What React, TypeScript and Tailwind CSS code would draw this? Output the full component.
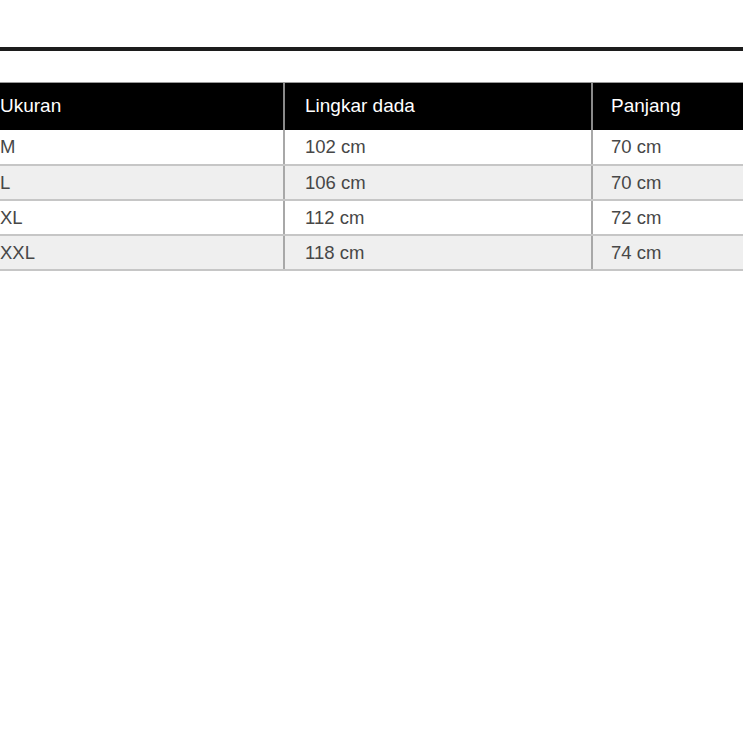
import React from "react";

const rows = [
  ["M", "102 cm", "70 cm"],
  ["L", "106 cm", "70 cm"],
  ["XL", "112 cm", "72 cm"],
  ["XXL", "118 cm", "74 cm"],
];

export default function App() {
  return (
    <div
      className="w-[743px] h-[743px] bg-white overflow-hidden pt-[47px]"
      style={{ fontFamily: '"Liberation Sans", Arial, sans-serif' }}
    >
      <div className="h-[4px] bg-[#1c1c1c]" />
      <div className="mt-[31px] border-t border-[#9a9a9a]">
        <div className="grid grid-cols-[285px_308px_1fr] h-[47px] bg-black text-white text-[19px]">
          <div className="flex items-center border-r-2 border-[#8a8a8a] pl-0">Ukuran</div>
          <div className="flex items-center border-r-2 border-[#8a8a8a] pl-[20px]">Lingkar dada</div>
          <div className="flex items-center pl-[18px]">Panjang</div>
        </div>
        {rows.map((r, i) => (
          <div
            key={r[0]}
            className={`grid grid-cols-[285px_308px_1fr] ${i === 0 ? "h-[36px]" : "h-[35px]"} border-b-2 border-[#c6c6c6] text-[18.5px] text-[#474747] ${
              i % 2 === 1 ? "bg-[#efefef]" : "bg-white"
            }`}
          >
            <div className="flex items-center border-r-2 border-[#a8a8a8]">{r[0]}</div>
            <div className="flex items-center border-r-2 border-[#a8a8a8] pl-[20px]">{r[1]}</div>
            <div className="flex items-center pl-[18px]">{r[2]}</div>
          </div>
        ))}
      </div>
    </div>
  );
}
